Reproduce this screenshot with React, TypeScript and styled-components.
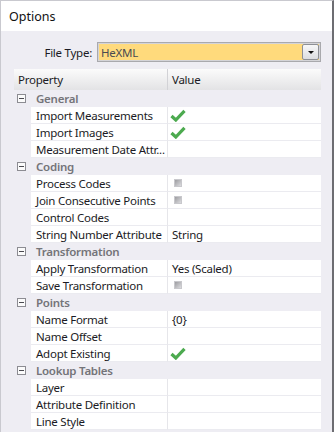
import React from "react";
import styled, { createGlobalStyle } from "styled-components";

const Global = createGlobalStyle`
  html, body { margin: 0; padding: 0; background: #ffffff; }
  * { box-sizing: border-box; }
`;

const FONT = `"Noto Sans", "Open Sans", "DejaVu Sans", sans-serif`;

const Window = styled.div`
  width: 334px;
  height: 432px;
  overflow: hidden;
  display: flex;
  flex-direction: column;
  border-top: 1px solid #c9c9cf;
  border-left: 1px solid #c9c9cf;
  border-right: 2px solid #6d6d72;
  font-family: ${FONT};
  font-size: 11.5px;
  letter-spacing: -0.25px;
  color: #1b1b24;
`;

const TitleBar = styled.div`
  height: 30px;
  flex: none;
  background: #ffffff;
  display: flex;
  align-items: center;
  padding-left: 8px;
  font-size: 12.5px;
  letter-spacing: 0;
  color: #111;
`;

const Body = styled.div`
  flex: 1;
  background: #eeedf3;
  padding: 11px 11px 0 13px;
  display: flex;
  flex-direction: column;
`;

const FileRow = styled.div`
  display: flex;
  align-items: center;
  height: 20px;
  gap: 5px;
`;

const Label = styled.div`
  width: 78px;
  text-align: right;
  color: #1b1b24;
`;

const Combo = styled.div`
  flex: 1;
  height: 20px;
  border: 1px solid #a9a9ad;
  box-shadow: inset 0 0 0 1px #d4d4d8;
  background: #ffda7c;
  display: flex;
  align-items: center;
  padding: 0 1px 0 3px;
  color: #4a4a52;
`;

const ComboText = styled.div`
  flex: 1;
`;

const DropButton = styled.div`
  width: 17px;
  height: 16px;
  border: 1px solid #8e9096;
  border-radius: 2px;
  background: linear-gradient(#f7f7f8, #dcdde0);
  display: flex;
  align-items: center;
  justify-content: center;
`;

const Arrow = styled.div`
  width: 0;
  height: 0;
  border-left: 3px solid transparent;
  border-right: 3px solid transparent;
  border-top: 3px solid #111;
  margin-top: 1px;
`;

const Grid = styled.div`
  margin-top: 7px;
  width: 307px;
  display: flex;
  flex-direction: column;
`;

const Header = styled.div`
  display: grid;
  grid-template-columns: 154px 1fr;
  height: 21px;
  background: linear-gradient(#fbfbfb, #e3e3e5);
`;

const HeaderCell = styled.div<{ $divider?: boolean }>`
  display: flex;
  align-items: center;
  padding-left: 4px;
  border-right: ${(p) => (p.$divider ? "1px solid #d2d2d6" : "none")};
  color: #1b1b24;
`;

const CategoryRow = styled.div`
  height: 17px;
  display: flex;
  align-items: center;
  padding-left: 3px;
  gap: 10px;
`;

const Toggle = styled.div`
  width: 9px;
  height: 9px;
  border: 1px solid #8c8c92;
  background: #fbfbfb;
  display: flex;
  align-items: center;
  justify-content: center;
  &::after {
    content: "";
    width: 5px;
    height: 1px;
    background: #4a4a50;
  }
`;

const CategoryName = styled.div`
  color: #747479;
  font-weight: 600;
`;

const PropRow = styled.div`
  height: 17px;
  display: grid;
  grid-template-columns: 17px 137px 1fr;
`;

const Cell = styled.div<{ $name?: boolean }>`
  background: #ffffff;
  border-bottom: 1px solid #ebebf0;
  border-right: ${(p) => (p.$name ? "1px solid #e6e6ea" : "none")};
  display: flex;
  align-items: center;
  padding-left: ${(p) => (p.$name ? "5px" : "4px")};
  white-space: nowrap;
  overflow: hidden;
`;

const Box = styled.div`
  width: 8px;
  height: 8px;
  margin-left: 2px;
  border: 1px solid #c8c8cc;
  background: linear-gradient(135deg, #9c9ca0, #dcdcdf);
`;

const Check = () => (
  <svg width="16" height="13" viewBox="0 0 16 13" style={{ marginLeft: -2 }}>
    <path d="M1.5 7 L5.8 11 L14.5 1.8" fill="none" stroke="#4caa4f" strokeWidth="3.2" strokeLinejoin="miter" />
  </svg>
);

type Val = { kind: "check" } | { kind: "box" } | { kind: "text"; text: string } | { kind: "none" };

const data: { name: string; rows: [string, Val][] }[] = [
  {
    name: "General",
    rows: [
      ["Import Measurements", { kind: "check" }],
      ["Import Images", { kind: "check" }],
      ["Measurement Date Attr...", { kind: "none" }],
    ],
  },
  {
    name: "Coding",
    rows: [
      ["Process Codes", { kind: "box" }],
      ["Join Consecutive Points", { kind: "box" }],
      ["Control Codes", { kind: "none" }],
      ["String Number Attribute", { kind: "text", text: "String" }],
    ],
  },
  {
    name: "Transformation",
    rows: [
      ["Apply Transformation", { kind: "text", text: "Yes (Scaled)" }],
      ["Save Transformation", { kind: "box" }],
    ],
  },
  {
    name: "Points",
    rows: [
      ["Name Format", { kind: "text", text: "{0}" }],
      ["Name Offset", { kind: "none" }],
      ["Adopt Existing", { kind: "check" }],
    ],
  },
  {
    name: "Lookup Tables",
    rows: [
      ["Layer", { kind: "none" }],
      ["Attribute Definition", { kind: "none" }],
      ["Line Style", { kind: "none" }],
    ],
  },
];

const renderVal = (v: Val) => {
  if (v.kind === "check") return <Check />;
  if (v.kind === "box") return <Box />;
  if (v.kind === "text") return v.text;
  return null;
};

export default function App() {
  return (
    <>
      <Global />
      <Window>
        <TitleBar>Options</TitleBar>
        <Body>
          <FileRow>
            <Label>File Type:</Label>
            <Combo>
              <ComboText>HeXML</ComboText>
              <DropButton>
                <Arrow />
              </DropButton>
            </Combo>
          </FileRow>
          <Grid>
            <Header>
              <HeaderCell $divider>Property</HeaderCell>
              <HeaderCell>Value</HeaderCell>
            </Header>
            {data.map((cat) => (
              <React.Fragment key={cat.name}>
                <CategoryRow>
                  <Toggle />
                  <CategoryName>{cat.name}</CategoryName>
                </CategoryRow>
                {cat.rows.map(([n, v]) => (
                  <PropRow key={n}>
                    <div />
                    <Cell $name>{n}</Cell>
                    <Cell>{renderVal(v)}</Cell>
                  </PropRow>
                ))}
              </React.Fragment>
            ))}
          </Grid>
        </Body>
      </Window>
    </>
  );
}
